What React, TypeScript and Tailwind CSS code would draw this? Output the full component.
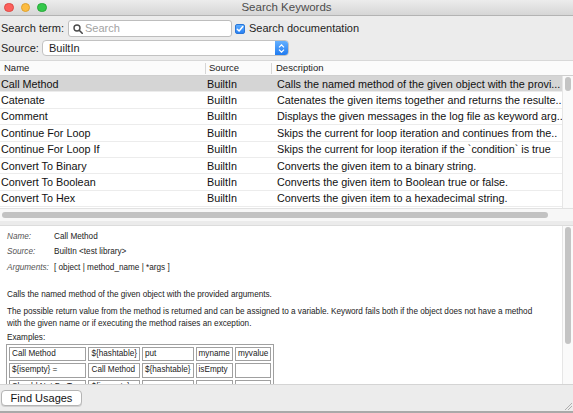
import React from "react";

interface KeywordRow {
  name: string;
  source: string;
  desc: string;
}

const rows: KeywordRow[] = [
  { name: "Call Method", source: "BuiltIn", desc: "Calls the named method of the given object with the provi..." },
  { name: "Catenate", source: "BuiltIn", desc: "Catenates the given items together and returns the resulte.." },
  { name: "Comment", source: "BuiltIn", desc: "Displays the given messages in the log file as keyword arg.." },
  { name: "Continue For Loop", source: "BuiltIn", desc: "Skips the current for loop iteration and continues from the.." },
  { name: "Continue For Loop If", source: "BuiltIn", desc: "Skips the current for loop iteration if the `condition` is true" },
  { name: "Convert To Binary", source: "BuiltIn", desc: "Converts the given item to a binary string." },
  { name: "Convert To Boolean", source: "BuiltIn", desc: "Converts the given item to Boolean true or false." },
  { name: "Convert To Hex", source: "BuiltIn", desc: "Converts the given item to a hexadecimal string." },
];

const examples: string[][] = [
  ["Call Method", "${hashtable}", "put", "myname", "myvalue"],
  ["${isempty} =", "Call Method", "${hashtable}", "isEmpty", ""],
  ["Should Not Be True", "${isempty}", "", "", ""],
];

const exampleWidths = ["w-[75px]", "w-[50px]", "w-[50px]", "w-[36px]", "w-[35px]"];

function TitleBar() {
  return (
    <div className="relative h-[16px] shrink-0 bg-gradient-to-b from-[#ececec] to-[#d6d6d6] border-b border-[#b3b3b3] flex items-center">
      <div className="flex items-center gap-[7px] pl-[4px]">
        <div className="w-[9.5px] h-[9.5px] rounded-full bg-[#fc605c] border border-[#de4a45]"></div>
        <div className="w-[9.5px] h-[9.5px] rounded-full bg-[#fdbc40] border border-[#dea12f]"></div>
        <div className="w-[9.5px] h-[9.5px] rounded-full bg-[#34c84a] border border-[#27a83a]"></div>
      </div>
      <div className="absolute inset-0 flex items-center justify-center text-[11.5px] text-[#4d4d4d]">Search Keywords</div>
    </div>
  );
}

function SearchForm() {
  return (
    <div className="h-[44px] shrink-0 flex flex-col pt-[4px] text-[11px] text-[#1e1e1e]">
      <div className="flex items-center h-[17px]">
        <span className="pl-[1px] w-[68px]">Search term:</span>
        <div className="w-[164px] h-[17px] bg-white border border-[#bdbdbd] rounded-[3px] flex items-center pl-[4px] gap-[2px]">
          <svg width="10" height="10" viewBox="0 0 10 10">
            <circle cx="4" cy="4" r="3" fill="none" stroke="#4a4a4a" strokeWidth="1.4" />
            <line x1="6.2" y1="6.2" x2="9.2" y2="9.2" stroke="#4a4a4a" strokeWidth="1.6" strokeLinecap="round" />
          </svg>
          <span className="text-[#a3a3a3]">Search</span>
        </div>
        <div className="ml-[3px] w-[10px] h-[10px] rounded-[2px] bg-gradient-to-b from-[#5aabff] to-[#2a82f4] border border-[#2a76d8] flex items-center justify-center">
          <svg width="8" height="8" viewBox="0 0 8 8">
            <path d="M1.3 4.2 L3.1 6 L6.8 1.6" fill="none" stroke="white" strokeWidth="1.5" strokeLinecap="round" strokeLinejoin="round" />
          </svg>
        </div>
        <span className="ml-[4px]">Search documentation</span>
      </div>
      <div className="flex items-center h-[16px] mt-[3px]">
        <span className="pl-[1px] w-[42px]">Source:</span>
        <div className="w-[247px] h-[16px] bg-white border border-[#c2c2c2] rounded-[4px] flex items-center overflow-hidden">
          <span className="flex-1 pl-[6px]">BuiltIn</span>
          <div className="w-[13px] h-full bg-gradient-to-b from-[#63b0ff] to-[#1f7bf0] flex flex-col items-center justify-center gap-[1px]">
            <svg width="7" height="4" viewBox="0 0 7 4">
              <path d="M1 3.3 L3.5 0.8 L6 3.3" fill="none" stroke="white" strokeWidth="1.2" />
            </svg>
            <svg width="7" height="4" viewBox="0 0 7 4">
              <path d="M1 0.7 L3.5 3.2 L6 0.7" fill="none" stroke="white" strokeWidth="1.2" />
            </svg>
          </div>
        </div>
      </div>
    </div>
  );
}

function KeywordTable() {
  return (
    <div className="h-[161px] shrink-0 flex flex-col bg-white border-t border-[#d8d8d8]">
      <div className="h-[15px] shrink-0 flex items-center text-[9.5px] text-[#222] bg-[#fbfbfb] border-b border-[#cfcfcf]">
        <div className="w-[206px] pl-[4px] border-r border-[#d6d6d6] h-[11px] flex items-center">Name</div>
        <div className="w-[66px] pl-[3px] border-r border-[#d6d6d6] h-[11px] flex items-center">Source</div>
        <div className="flex-1 pl-[4px]">Description</div>
      </div>
      <div className="flex flex-1">
        <div className="w-[562px] flex flex-col">
          {rows.map((row, i) => (
            <div
              key={row.name}
              className={`h-[16.4px] shrink-0 flex items-center text-[10.8px] text-[#111] whitespace-nowrap border-b border-[#ececec] ${i === 0 ? "bg-[#d5d5d5]" : "bg-white"}`}
            >
              <div className="w-[206px] pl-[1px] overflow-hidden">{row.name}</div>
              <div className="w-[66px] pl-[1px] overflow-hidden">{row.source}</div>
              <div className="flex-1 pl-[5px] overflow-hidden">{row.desc}</div>
            </div>
          ))}
        </div>
        <div className="flex-1 bg-[#fafafa] border-l border-[#e6e6e6] pt-[1px] pl-[2px]">
          <div className="w-[6px] h-[14px] rounded-full bg-[#c4c4c4]"></div>
        </div>
      </div>
      <div className="h-[13px] shrink-0 bg-[#f7f7f7] border-t border-[#e2e2e2] flex items-center pl-[2px]">
        <div className="w-[546px] h-[6.5px] rounded-full bg-[#c2c2c2]"></div>
      </div>
    </div>
  );
}

function Details() {
  return (
    <div className="h-[159px] shrink-0 flex bg-white border-t border-[#dcdcdc] overflow-hidden">
      <div className="w-[562px] pl-[7px] pt-[3px] text-[8.2px] text-[#222] flex flex-col">
        <div className="flex h-[15.5px] shrink-0 items-center">
          <span className="w-[47px] italic text-[#555]">Name:</span>
          <span>Call Method</span>
        </div>
        <div className="flex h-[15.5px] shrink-0 items-center">
          <span className="w-[47px] italic text-[#555]">Source:</span>
          <span>BuiltIn &lt;test library&gt;</span>
        </div>
        <div className="flex h-[15.5px] shrink-0 items-center">
          <span className="w-[47px] italic text-[#555]">Arguments:</span>
          <span>[ object | method_name | *args ]</span>
        </div>
        <p className="mt-[13px] shrink-0 leading-[12px]">Calls the named method of the given object with the provided arguments.</p>
        <p className="mt-[5px] shrink-0 leading-[12px]">
          The possible return value from the method is returned and can be assigned to a variable. Keyword fails both if the object does not have a method
          <br />
          with the given name or if executing the method raises an exception.
        </p>
        <p className="mt-[2px] shrink-0 leading-[12px]">Examples:</p>
        <table className="shrink-0 border-separate border-spacing-[2px] border border-[#a0a0a0] w-[253px] -ml-[1px]">
          <tbody>
            {examples.map((row, r) => (
              <tr key={r}>
                {row.map((cell, c) => (
                  <td key={c} className={`${exampleWidths[c]} h-[14.5px] border border-[#a0a0a0] px-[2px] whitespace-nowrap overflow-hidden leading-[12px]`}>
                    {cell}
                  </td>
                ))}
              </tr>
            ))}
          </tbody>
        </table>
      </div>
      <div className="flex-1 bg-[#fafafa] border-l border-[#e6e6e6] pl-[2px] pt-[1px]">
        <div className="w-[6px] h-[117px] rounded-full bg-[#c4c4c4]"></div>
      </div>
    </div>
  );
}

export default function App() {
  return (
    <div className="w-[573px] h-[413px] bg-[#ececec] flex flex-col overflow-hidden font-['Liberation_Sans',Arial,sans-serif]">
      <TitleBar />
      <SearchForm />
      <KeywordTable />
      <div className="h-[4px] shrink-0 bg-[#ebebeb]"></div>
      <Details />
      <div className="relative flex-1 bg-[#ececec] border-t border-[#d4d4d4] border-b-2 border-b-[#a9a9a9] pl-[1px] pt-[5px]">
        <button className="w-[81px] h-[16px] bg-white border border-[#b4b4b4] rounded-[4px] text-[11px] text-[#111] flex items-center justify-center shadow-[0_1px_0_#d0d0d0]">
          Find Usages
        </button>
        <svg className="absolute right-[1px] bottom-[1px]" width="8" height="8" viewBox="0 0 8 8">
          <line x1="1" y1="8" x2="8" y2="1" stroke="#a0a0a0" strokeWidth="0.8" />
          <line x1="4" y1="8" x2="8" y2="4" stroke="#a0a0a0" strokeWidth="0.8" />
        </svg>
      </div>
    </div>
  );
}
